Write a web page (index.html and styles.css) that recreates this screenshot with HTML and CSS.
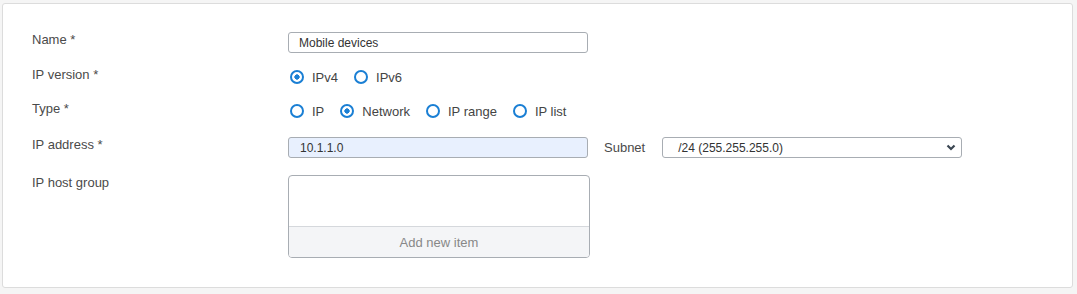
FILE: index.html
```html
<!DOCTYPE html>
<html lang="en">
<head>
  <meta charset="UTF-8">
  <meta name="viewport" content="width=device-width, initial-scale=1.0">
  <link rel="stylesheet" href="styles.css">
</head>
<body>
  <div class="card">
    <div class="form">
      <label class="label">Name *</label>
      <div class="control">
        <input class="text-input" type="text" value="Mobile devices">
      </div>

      <label class="label">IP version *</label>
      <div class="control radios">
        <span class="radio checked">IPv4</span>
        <span class="radio">IPv6</span>
      </div>

      <label class="label">Type *</label>
      <div class="control radios">
        <span class="radio">IP</span>
        <span class="radio checked">Network</span>
        <span class="radio">IP range</span>
        <span class="radio">IP list</span>
      </div>

      <label class="label spaced">IP address *</label>
      <div class="control inline spaced">
        <input class="text-input filled" type="text" value="10.1.1.0">
        <span class="sub-label">Subnet</span>
        <div class="select">
          <span>/24 (255.255.255.0)</span>
          <svg class="chevron" width="10" height="7" viewBox="0 0 10 7">
            <path d="M1.5 1.5 L5 5 L8.5 1.5" fill="none" stroke="#3b4652" stroke-width="2.2"/>
          </svg>
        </div>
      </div>

      <label class="label spaced-lg">IP host group</label>
      <div class="control spaced-lg">
        <div class="list-box">
          <div class="list-body"></div>
          <div class="list-footer">Add new item</div>
        </div>
      </div>
    </div>
  </div>
</body>
</html>
```

FILE: styles.css
```css
body {
  margin: 0;
  background-color: #f5f5f5;
  font-family: "Liberation Sans", Arial, sans-serif;
  color: #444;
}

.card {
  margin: 3px 4px 0 2px;
  height: 285px;
  box-sizing: border-box;
  background-color: #fff;
  border: 1px solid #dcdcdc;
  border-radius: 3px;
  padding: 28px 29px;
}

.form {
  display: grid;
  grid-template-columns: 256px 1fr;
  row-gap: 14px;
}

.label {
  font-size: 13px;
  line-height: 13px;
  color: #4a4a4a;
  padding-top: 1px;
}

.spaced {
  margin-top: 2px;
}

.spaced-lg {
  margin-top: 3px;
}

.control {
  display: flex;
  align-items: center;
  min-height: 20px;
}

.text-input {
  width: 300px;
  height: 21px;
  box-sizing: border-box;
  border: 1px solid #a8adb3;
  border-radius: 3px;
  padding: 0 10px;
  font-family: inherit;
  font-size: 12px;
  color: #333;
  background-color: #fff;
  outline: none;
}

.text-input.filled {
  background-color: #e8f0fe;
  padding: 0 11px;
}

.radios {
  gap: 14px;
}

.radio {
  display: flex;
  align-items: center;
  font-size: 13px;
  color: #444;
}

.radio::before {
  content: "";
  width: 10px;
  height: 10px;
  border: 2px solid #1a7fd4;
  border-radius: 50%;
  margin: 0 8px 0 2px;
  background-color: #fff;
}

.radio.checked::before {
  background: radial-gradient(circle, #1a7fd4 0 2.4px, #fff 2.9px);
}

.inline {
  gap: 0;
}

.sub-label {
  font-size: 13px;
  margin: 0 17px 0 16px;
  color: #4a4a4a;
}

.select {
  width: 300px;
  height: 21px;
  box-sizing: border-box;
  border: 1px solid #a8adb3;
  border-radius: 3px;
  display: flex;
  align-items: center;
  justify-content: space-between;
  padding: 0 5px 0 15px;
  font-size: 12px;
  color: #333;
}

.list-box {
  width: 302px;
  height: 83px;
  box-sizing: border-box;
  border: 1px solid #a8adb3;
  border-radius: 4px;
  display: flex;
  flex-direction: column;
  overflow: hidden;
}

.list-body {
  flex: 1;
  border-bottom: 1px solid #d5d8dc;
}

.list-footer {
  height: 30px;
  background-color: #f4f5f7;
  color: #888;
  font-size: 13px;
  display: flex;
  align-items: center;
  justify-content: center;
}
```
